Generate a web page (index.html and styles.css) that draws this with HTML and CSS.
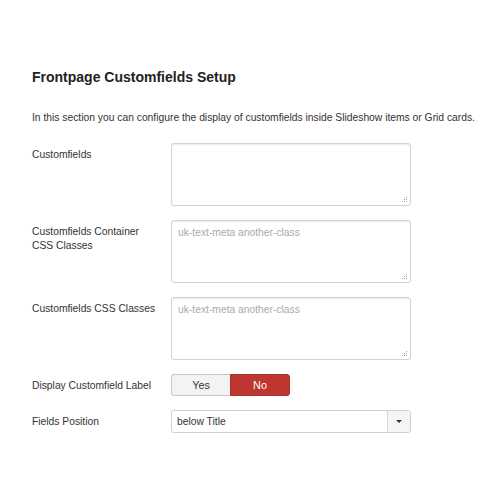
FILE: index.html
```html
<!DOCTYPE html>
<html>
<head>
<meta charset="utf-8">
<link rel="stylesheet" href="styles.css">
</head>
<body>
<div class="page">
  <h3 class="title">Frontpage Customfields Setup</h3>
  <p class="desc">In this section you can configure the display of customfields inside Slideshow items or Grid cards.</p>

  <div class="row">
    <label class="lbl">Customfields</label>
    <div class="ctl"><textarea class="ta"></textarea><span class="grip"></span></div>
  </div>

  <div class="row">
    <label class="lbl">Customfields Container CSS Classes</label>
    <div class="ctl"><textarea class="ta" placeholder="uk-text-meta another-class"></textarea><span class="grip"></span></div>
  </div>

  <div class="row">
    <label class="lbl">Customfields CSS Classes</label>
    <div class="ctl"><textarea class="ta" placeholder="uk-text-meta another-class"></textarea><span class="grip"></span></div>
  </div>

  <div class="row">
    <label class="lbl">Display Customfield Label</label>
    <div class="ctl">
      <div class="toggle">
        <span class="tbtn yes">Yes</span>
        <span class="tbtn no">No</span>
      </div>
    </div>
  </div>

  <div class="row">
    <label class="lbl">Fields Position</label>
    <div class="ctl">
      <div class="select">
        <span class="sel-text">below Title</span>
        <span class="sel-arrow"><span class="tri"></span></span>
      </div>
    </div>
  </div>
</div>
</body>
</html>
```

FILE: styles.css
```css
html, body {
  margin: 0;
  padding: 0;
  background: #fff;
}
body {
  font-family: "Liberation Sans", Arial, sans-serif;
  color: #333;
  font-size: 10.3px;
}
.page {
  padding: 68px 0 0 32px;
}
.title {
  margin: 0;
  font-size: 14px;
  line-height: 18px;
  font-weight: bold;
  color: #222;
}
.desc {
  margin: 23px 0 0;
  line-height: 18px;
  font-size: 10.3px;
}
.desc + .row {
  margin-top: 16px;
}
.row {
  display: flex;
  margin-bottom: 14px;
}
.lbl {
  width: 125px;
  flex: none;
  margin-right: 14px;
  padding-top: 5px;
  line-height: 14px;
  font-size: 10.3px;
}
.ctl {
  flex: none;
  position: relative;
}
.ta {
  display: block;
  box-sizing: border-box;
  width: 240px;
  height: 63px;
  margin: 0;
  padding: 5px 6px;
  border: 1px solid #d2d2d2;
  border-radius: 3px;
  box-shadow: inset 0 1px 1px rgba(0,0,0,0.08);
  font-family: "Liberation Sans", Arial, sans-serif;
  font-size: 10.3px;
  line-height: 14px;
  color: #555;
  background: #fff;
  resize: none;
  outline: none;
}
.ta::placeholder {
  color: #aaa;
}
.grip {
  position: absolute;
  right: 4px;
  bottom: 8px;
  width: 1px;
  height: 1px;
  background: #a5a5a5;
  box-shadow:
    0 2px 0 #a5a5a5,
    -2px 2px 0 #a5a5a5,
    0 4px 0 #a5a5a5,
    -2px 4px 0 #a5a5a5,
    -4px 4px 0 #a5a5a5;
}
.toggle {
  display: flex;
  width: 119px;
  height: 22px;
  box-sizing: border-box;
}
.tbtn {
  flex: 1;
  display: flex;
  align-items: center;
  justify-content: center;
  font-size: 10.8px;
  box-sizing: border-box;
}
.yes {
  background: #f3f3f3;
  border: 1px solid #c8c8c8;
  border-right: none;
  border-radius: 3px 0 0 3px;
  color: #333;
}
.no {
  background: #bd362f;
  border: 1px solid #a8302a;
  border-radius: 0 3px 3px 0;
  color: #fff;
}
.select {
  display: flex;
  width: 240px;
  height: 23px;
  box-sizing: border-box;
  border: 1px solid #d0d0d0;
  border-radius: 3px;
  background: #fff;
}
.sel-text {
  flex: 1;
  padding-left: 5px;
  line-height: 21px;
  font-size: 10.3px;
  color: #333;
}
.sel-arrow {
  width: 22px;
  flex: none;
  display: flex;
  align-items: center;
  justify-content: center;
  background: #f5f5f5;
  border-left: 1px solid #d8d8d8;
  border-radius: 0 3px 3px 0;
}
.tri {
  width: 0;
  height: 0;
  border-left: 3px solid transparent;
  border-right: 3px solid transparent;
  border-top: 3px solid #333;
}
```
